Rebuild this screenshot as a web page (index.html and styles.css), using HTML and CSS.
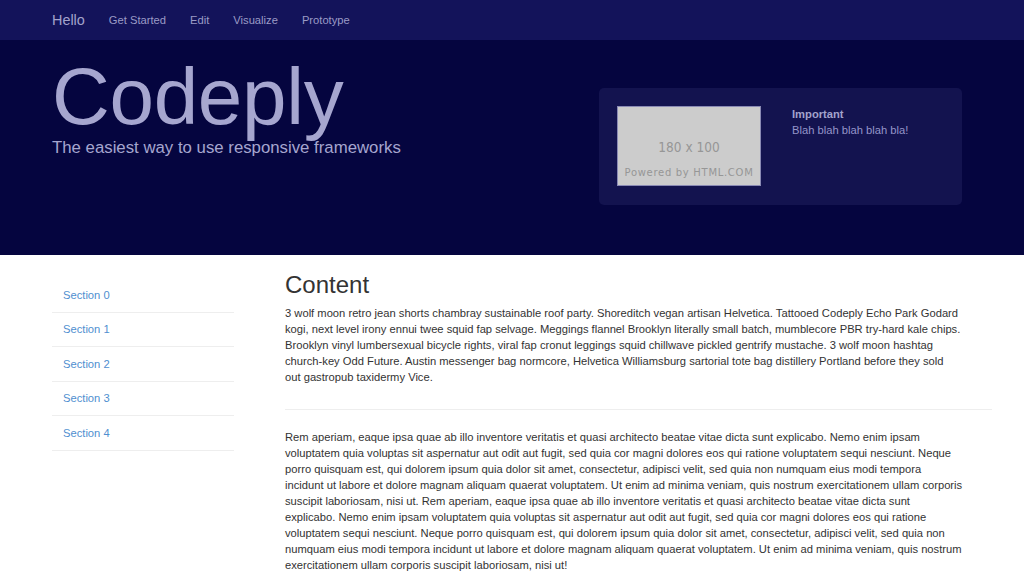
FILE: index.html
```html
<!DOCTYPE html>
<html>
<head>
<meta charset="utf-8">
<link rel="stylesheet" href="styles.css">
</head>
<body>
<nav class="navbar">
  <div class="wrap navbar-inner">
    <a class="brand">Hello</a>
    <a class="nav-link">Get Started</a>
    <a class="nav-link">Edit</a>
    <a class="nav-link">Visualize</a>
    <a class="nav-link">Prototype</a>
  </div>
</nav>
<header class="hero">
  <div class="wrap hero-inner">
    <div class="hero-text">
      <h1 class="title">Codeply</h1>
      <p class="lead">The easiest way to use responsive frameworks</p>
    </div>
    <div class="panel">
      <div class="placeholder">
        <span class="ph-size">180 x 100</span>
        <span class="ph-by">Powered by HTML.COM</span>
      </div>
      <div class="panel-text">
        <strong>Important</strong>
        <span>Blah blah blah blah bla!</span>
      </div>
    </div>
  </div>
</header>
<main class="wrap main">
  <ul class="sidenav">
    <li><a>Section 0</a></li>
    <li><a>Section 1</a></li>
    <li><a>Section 2</a></li>
    <li><a>Section 3</a></li>
    <li><a>Section 4</a></li>
  </ul>
  <section class="content">
    <h2>Content</h2>
    <p>3 wolf moon retro jean shorts chambray sustainable roof party. Shoreditch vegan artisan Helvetica. Tattooed Codeply Echo Park Godard kogi, next level irony ennui twee squid fap selvage. Meggings flannel Brooklyn literally small batch, mumblecore PBR try-hard kale chips. Brooklyn vinyl lumbersexual bicycle rights, viral fap cronut leggings squid chillwave pickled gentrify mustache. 3 wolf moon hashtag church-key Odd Future. Austin messenger bag normcore, Helvetica Williamsburg sartorial tote bag distillery Portland before they sold out gastropub taxidermy Vice.</p>
    <hr>
    <p class="wide">Rem aperiam, eaque ipsa quae ab illo inventore veritatis et quasi architecto beatae vitae dicta sunt explicabo. Nemo enim ipsam voluptatem quia voluptas sit aspernatur aut odit aut fugit, sed quia cor magni dolores eos qui ratione voluptatem sequi nesciunt. Neque porro quisquam est, qui dolorem ipsum quia dolor sit amet, consectetur, adipisci velit, sed quia non numquam eius modi tempora<br>incidunt ut labore et dolore magnam aliquam quaerat voluptatem. Ut enim ad minima veniam, quis nostrum exercitationem ullam corporis suscipit laboriosam, nisi ut. Rem aperiam, eaque ipsa quae ab illo inventore veritatis et quasi architecto beatae vitae dicta sunt<br>explicabo. Nemo enim ipsam voluptatem quia voluptas sit aspernatur aut odit aut fugit, sed quia cor magni dolores eos qui ratione voluptatem sequi nesciunt. Neque porro quisquam est, qui dolorem ipsum quia dolor sit amet, consectetur, adipisci velit, sed quia non numquam eius modi tempora incidunt ut labore et dolore magnam aliquam quaerat voluptatem. Ut enim ad minima veniam, quis nostrum exercitationem ullam corporis suscipit laboriosam, nisi ut!</p>
  </section>
</main>
</body>
</html>
```
FILE: styles.css
```css
* { box-sizing: border-box; }
html, body { margin: 0; padding: 0; }
body {
  font-family: "Liberation Sans", Arial, sans-serif;
  font-size: 11.2px;
  line-height: 16px;
  color: #333;
  background: #fff;
  overflow: hidden;
}
.wrap {
  width: 940px;
  margin-left: 52px;
}
.navbar {
  background: #13135a;
  height: 40px;
}
.navbar-inner {
  display: flex;
  align-items: center;
  height: 40px;
}
.brand {
  font-size: 14.4px;
  color: #a3a3cc;
  padding-right: 12px;
}
.nav-link {
  font-size: 11.2px;
  color: #9b9bc6;
  padding: 0 12px;
}
.hero {
  background: #05053f;
  height: 215px;
}
.hero-inner {
  display: flex;
  justify-content: space-between;
  align-items: flex-start;
}
.hero-text { padding-top: 17px; }
.title {
  font-size: 80px;
  line-height: 80px;
  font-weight: normal;
  color: #a6a6cf;
  margin: 0;
  letter-spacing: -0.3px;
}
.lead {
  font-size: 16.8px;
  line-height: 20px;
  color: #a6a6cf;
  margin: 1px 0 0 0;
}
.panel {
  margin-top: 48px;
  margin-right: 30px;
  width: 363px;
  height: 117px;
  background: #13134f;
  border-radius: 5px;
  padding: 18px;
  display: flex;
  gap: 31px;
}
.placeholder {
  width: 144px;
  height: 80px;
  background: #cccccc;
  border: 1px solid #8a8ab4;
  display: flex;
  flex-direction: column;
  align-items: center;
  font-family: "DejaVu Sans", sans-serif;
  color: #969696;
  flex: none;
}
.ph-size {
  font-size: 13.5px;
  margin-top: 32px;
  line-height: 16px;
  font-family: "DejaVu Sans Condensed", "DejaVu Sans", sans-serif;
}
.ph-by {
  font-size: 10px;
  line-height: 12px;
  margin-top: 12px;
  letter-spacing: 0.7px;
}
.panel-text {
  display: flex;
  flex-direction: column;
  color: #9595c9;
  font-size: 11.2px;
  line-height: 16px;
  padding-top: 0;
}
.panel-text strong { color: #a3a3cc; }
.main {
  display: flex;
  gap: 51px;
  padding-top: 15px;
}
.sidenav {
  list-style: none;
  margin: 8px 0 0 0;
  padding: 0;
  width: 182px;
  flex: none;
}
.sidenav li {
  border-bottom: 1px solid #eeeeee;
  height: 34.5px;
  display: flex;
  align-items: center;
  padding-left: 11px;
}
.sidenav a {
  color: #4f8fd0;
  font-size: 11.2px;
}
.content {
  flex: 1;
  min-width: 0;
}
.content h2 {
  font-size: 24px;
  font-weight: normal;
  line-height: 30px;
  margin: 0 0 5px 0;
  color: #333;
}
.content p {
  margin: 0;
  width: 677px;
}
.content p.wide {
  width: 680px;
}
.content hr {
  border: 0;
  border-top: 1px solid #eeeeee;
  margin: 24px 0 19px 0;
}
```
